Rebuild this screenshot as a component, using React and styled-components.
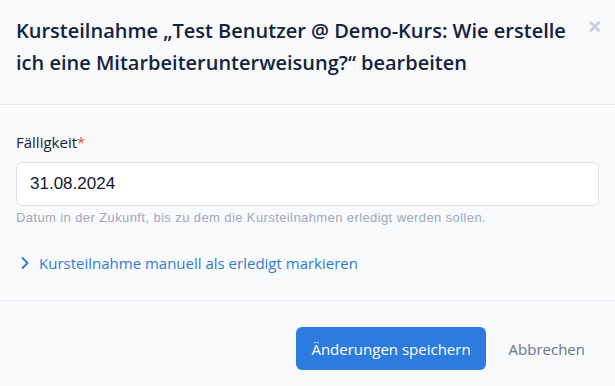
import styled, { createGlobalStyle } from "styled-components";

const GlobalStyle = createGlobalStyle`
    html, body {
        margin: 0;
        padding: 0;
        background: #f9fafc;
    }
    body {
        font-family: "Open Sans", "Lato", sans-serif;
        -webkit-font-smoothing: antialiased;
    }
`

function ChevronRight(){
    return (
        <svg width="12" height="14" viewBox="0 0 12 14" fill="none">
            <path d="M3.5 2 L8.5 7 L3.5 12" stroke="#2f7bd6" strokeWidth="1.8" strokeLinecap="round" strokeLinejoin="round"/>
        </svg>
    )
}

export default function App(){
    return(
        <Modal>
            <GlobalStyle/>
            <Header>
                <Title>Kursteilnahme „Test Benutzer @ Demo-Kurs: Wie erstelle ich eine Mitarbeiterunterweisung?“ bearbeiten</Title>
                <CloseBtn type="button">×</CloseBtn>
            </Header>
            <Body>
                <Label>Fälligkeit<Req>*</Req></Label>
                <DateInput type="text" defaultValue="31.08.2024"/>
                <Hint>Datum in der Zukunft, bis zu dem die Kursteilnahmen erledigt werden sollen.</Hint>
                <Toggle type="button"><ChevronRight/>Kursteilnahme manuell als erledigt markieren</Toggle>
            </Body>
            <Footer>
                <PrimaryBtn type="button">Änderungen speichern</PrimaryBtn>
                <GhostBtn type="button">Abbrechen</GhostBtn>
            </Footer>
        </Modal>
    )
}

const Modal = styled.div`
    width: 615px;
    height: 386px;
    background: #f9fafc;
    overflow: hidden;
`
const Header = styled.div`
    display: flex;
    align-items: flex-start;
    justify-content: space-between;
    padding: 15px 16px 0 16px;
    height: 89px;
    border-bottom: 1px solid #e6e8ee;
`
const Title = styled.h2`
    margin: 0;
    width: 550px;
    font-size: 20px;
    line-height: 32px;
    font-weight: 600;
    color: #132340;
`
const CloseBtn = styled.button`
    border: none;
    background: none;
    padding: 0;
    margin: 0 -2px 0 0;
    font-size: 22px;
    font-weight: 700;
    line-height: 24px;
    color: #c8cdda;
    font-family: "Liberation Sans", sans-serif;
    cursor: pointer;
`
const Body = styled.div`
    padding: 27px 16px 0 16px;
    height: 168px;
    border-bottom: 1px solid #e6e8ee;
`
const Label = styled.div`
    font-size: 15px;
    line-height: 20px;
    color: #1a2238;
    margin-bottom: 10px;
`
const Req = styled.span`
    color: #e5533d;
`
const DateInput = styled.input`
    box-sizing: border-box;
    display: block;
    width: 583px;
    height: 44px;
    padding: 0 13px;
    border: 1px solid #dcdfe8;
    border-radius: 6px;
    background: #fff;
    font-family: "Liberation Sans", sans-serif;
    font-size: 17px;
    color: #111827;
    outline: none;
`
const Hint = styled.div`
    margin-top: 3px;
    font-family: "Liberation Sans", sans-serif;
    font-size: 13px;
    line-height: 18px;
    letter-spacing: 0.4px;
    color: #a0a8bc;
`
const Toggle = styled.button`
    display: flex;
    align-items: center;
    gap: 8px;
    margin-top: 26px;
    padding: 0 0 0 3px;
    border: none;
    background: none;
    font-family: inherit;
    font-size: 15px;
    line-height: 20px;
    color: #2f7bd6;
    cursor: pointer;
`
const Footer = styled.div`
    display: flex;
    align-items: center;
    justify-content: flex-end;
    gap: 9px;
    padding: 26px 16px 0 0;
`
const PrimaryBtn = styled.button`
    height: 43px;
    padding: 0 15px;
    border: none;
    border-radius: 6px;
    background: #2e7be0;
    color: #fff;
    font-family: inherit;
    font-size: 15px;
    cursor: pointer;
`
const GhostBtn = styled.button`
    height: 43px;
    padding: 0 14px;
    border: none;
    background: none;
    color: #6b7488;
    font-family: inherit;
    font-size: 15px;
    cursor: pointer;
`
